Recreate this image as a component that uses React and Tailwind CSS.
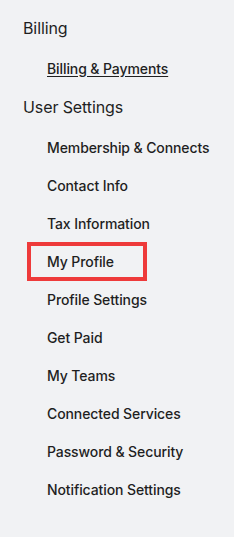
export default function App() {
  const items = [
    "Membership & Connects",
    "Contact Info",
    "Tax Information",
    "My Profile",
    "Profile Settings",
    "Get Paid",
    "My Teams",
    "Connected Services",
    "Password & Security",
    "Notification Settings",
  ];
  return (
    <div
      className="w-[234px] h-[537px] bg-[#f1f2f4] text-[#1f1f1f] pl-[23px] pt-[17px]"
      style={{ fontFamily: "Inter, 'Liberation Sans', sans-serif" }}
    >
      <div className="text-[16px] leading-[22px] tracking-[-0.1px]">Billing</div>
      <div className="pl-[24px] mt-[18px] h-[22px] flex items-center">
        <a className="text-[14px] font-medium tracking-[-0.1px] underline underline-offset-2">Billing &amp; Payments</a>
      </div>
      <div className="text-[16px] leading-[22px] mt-[17px] tracking-[-0.1px]">User Settings</div>
      <ul className="mt-[10px] flex flex-col">
        {items.map((t) => (
          <li key={t} className="h-[38px] flex items-center">
            {t === "My Profile" ? (
              <span className="ml-[4px] border-[4px] border-[#ee3a3a] h-[39px] w-[120px] pl-[16px] flex items-center text-[14px] font-medium tracking-[-0.1px]">
                {t}
              </span>
            ) : (
              <span className="pl-[24px] text-[14px] font-medium tracking-[-0.1px]">{t}</span>
            )}
          </li>
        ))}
      </ul>
    </div>
  );
}
